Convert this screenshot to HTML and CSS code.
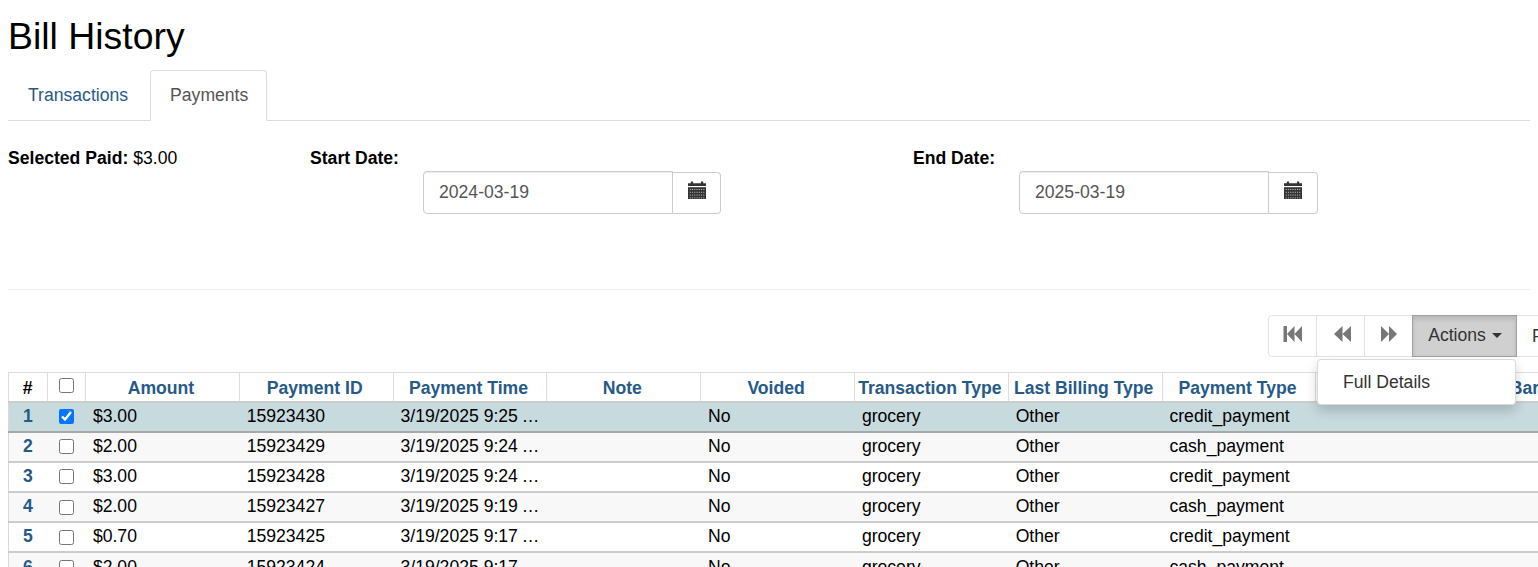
FILE: index.html
```html
<!DOCTYPE html>
<html lang="en">
<head>
    <meta charset="UTF-8">
    <meta name="viewport" content="width=device-width, initial-scale=1.0">
    <title>Bill History</title>
    <link rel="stylesheet" href="styles.css">
</head>
<body>
    <h1 class="page-title">Bill History</h1>
    <ul class="tabs">
        <li class="tab"><a href="#">Transactions</a></li>
        <li class="tab active"><a href="#">Payments</a></li>
    </ul>

    <div class="filters">
        <div class="filter-paid"><b>Selected Paid:</b> $3.00</div>
        <div class="filter-date filter-start">
            <b>Start Date:</b>
            <div class="input-group">
                <input class="date-input" type="text" value="2024-03-19">
                <span class="addon">
                    <svg class="icon-cal" viewBox="0 0 16 16"><path d="M0 5.500h16V16H0z"/><path d="M0 2h2.500V.5h2V2h7V.5h2V2H16v2.500H0z"/><path class="cal-grid" d="M1.500 7.500h13M1.500 10h13M1.500 12.500h13M1.500 15h13"/></svg>
                </span>
            </div>
        </div>
        <div class="filter-date filter-end">
            <b>End Date:</b>
            <div class="input-group">
                <input class="date-input" type="text" value="2025-03-19">
                <span class="addon">
                    <svg class="icon-cal" viewBox="0 0 16 16"><path d="M0 5.500h16V16H0z"/><path d="M0 2h2.500V.5h2V2h7V.5h2V2H16v2.500H0z"/><path class="cal-grid" d="M1.500 7.500h13M1.500 10h13M1.500 12.500h13M1.500 15h13"/></svg>
                </span>
            </div>
        </div>
    </div>

    <hr class="divider">

    <div class="toolbar">
        <button class="btn btn-first">
            <svg class="icon-nav" viewBox="0 0 20 16"><path d="M.5 0h3.500v16H.5zM4 8l7.500-8v16zM11.500 8l7.500-8v16z"/></svg>
        </button>
        <button class="btn">
            <svg class="icon-nav" viewBox="0 0 20 16"><path d="M3 8l8.500-8v16zM11.500 8l8.500-8v16z"/></svg>
        </button>
        <button class="btn">
            <svg class="icon-nav" viewBox="0 0 20 16"><path d="M2 0l8 8-8 8zM10 0l8 8-8 8z"/></svg>
        </button>
        <div class="actions">
            <button class="btn btn-actions">Actions <span class="caret"></span></button>
            <ul class="dropdown">
                <li>Full Details</li>
            </ul>
        </div>
        <button class="btn btn-text">Filter</button>
    </div>

    <table class="grid">
        <colgroup>
            <col class="col-num">
            <col class="col-check">
            <col class="col-data" span="10">
        </colgroup>
        <thead>
            <tr>
                <th class="hash">#</th>
                <th class="check"><input type="checkbox"></th>
                <th>Amount</th>
                <th>Payment ID</th>
                <th>Payment Time</th>
                <th>Note</th>
                <th>Voided</th>
                <th>Transaction Type</th>
                <th>Last Billing Type</th>
                <th>Payment Type</th>
                <th>Card Type</th>
                <th>Barcode</th>
            </tr>
        </thead>
        <tbody>
            <tr class="selected">
                <td class="num">1</td><td class="check"><input type="checkbox" checked></td>
                <td>$3.00</td><td>15923430</td><td>3/19/2025 9:25 AM</td><td></td><td>No</td><td>grocery</td><td>Other</td><td>credit_payment</td><td></td><td></td>
            </tr>
            <tr>
                <td class="num">2</td><td class="check"><input type="checkbox"></td>
                <td>$2.00</td><td>15923429</td><td>3/19/2025 9:24 AM</td><td></td><td>No</td><td>grocery</td><td>Other</td><td>cash_payment</td><td></td><td></td>
            </tr>
            <tr>
                <td class="num">3</td><td class="check"><input type="checkbox"></td>
                <td>$3.00</td><td>15923428</td><td>3/19/2025 9:24 AM</td><td></td><td>No</td><td>grocery</td><td>Other</td><td>credit_payment</td><td></td><td></td>
            </tr>
            <tr>
                <td class="num">4</td><td class="check"><input type="checkbox"></td>
                <td>$2.00</td><td>15923427</td><td>3/19/2025 9:19 AM</td><td></td><td>No</td><td>grocery</td><td>Other</td><td>cash_payment</td><td></td><td></td>
            </tr>
            <tr>
                <td class="num">5</td><td class="check"><input type="checkbox"></td>
                <td>$0.70</td><td>15923425</td><td>3/19/2025 9:17 AM</td><td></td><td>No</td><td>grocery</td><td>Other</td><td>credit_payment</td><td></td><td></td>
            </tr>
            <tr>
                <td class="num">6</td><td class="check"><input type="checkbox"></td>
                <td>$2.00</td><td>15923424</td><td>3/19/2025 9:17 AM</td><td></td><td>No</td><td>grocery</td><td>Other</td><td>cash_payment</td><td></td><td></td>
            </tr>
        </tbody>
    </table>
</body>
</html>
```

FILE: styles.css
```css
html, body {
    height: 567px;
    overflow: hidden;
}
body {
    margin: 0;
    padding: 0 8px;
    font-family: "Liberation Sans", Arial, sans-serif;
    font-size: 17.6px;
    color: #000;
    background-color: #fff;
}
.page-title {
    margin: 0;
    padding-top: 16px;
    font-size: 37.4px;
    font-weight: 400;
    line-height: 40px;
    height: 54px;
}
.tabs {
    display: flex;
    margin: 0;
    padding: 0;
    list-style: none;
    border-bottom: 1px solid #ddd;
    height: 50px;
}
.tab {
    margin-right: 2px;
}
.tab a {
    display: block;
    height: 50px;
    box-sizing: border-box;
    padding: 13px 19px;
    line-height: 22px;
    color: #265a88;
    text-decoration: none;
    border: 1px solid transparent;
    border-radius: 4px 4px 0 0;
}
.tab.active a {
    height: 51px;
    padding-right: 18px;
    color: #555;
    background-color: #fff;
    border-color: #ddd #ddd #fff;
}
.filters {
    display: flex;
    height: 168px;
    padding-top: 27px;
    box-sizing: border-box;
    line-height: 20px;
}
.filter-paid {
    width: 302px;
}
.filter-date b {
    display: block;
}
.filter-start {
    width: 603px;
}
.input-group {
    display: flex;
    align-items: center;
    margin-top: 3px;
}
.filter-start .input-group {
    margin-left: 113px;
}
.filter-end .input-group {
    margin-left: 106px;
}
.date-input {
    width: 250px;
    height: 43px;
    box-sizing: border-box;
    padding: 6px 15px;
    font-family: inherit;
    font-size: 17.6px;
    color: #555;
    border: 1px solid #ccc;
    border-radius: 4px 0 0 4px;
    box-shadow: inset 0 1px 1px rgba(0, 0, 0, 0.075);
}
.addon {
    display: flex;
    align-items: center;
    justify-content: center;
    width: 49px;
    height: 42px;
    box-sizing: border-box;
    border: 1px solid #ccc;
    border-left: 0;
    border-radius: 0 4px 4px 0;
}
.filter-start .addon {
    width: 48px;
}
.icon-cal {
    width: 18px;
    height: 18px;
    margin-top: -5px;
    fill: #333;
}
.cal-grid {
    fill: none;
    stroke: #fff;
    stroke-width: 0.6;
    stroke-dasharray: 1 1;
}
.divider {
    margin: 0;
    border: 0;
    border-top: 1px solid #eee;
}
.toolbar {
    display: flex;
    width: 400px;
    height: 42px;
    margin: 25px 0 0 1260px;
}
.btn {
    width: 49px;
    height: 42px;
    padding: 0;
    margin-left: -1px;
    font-family: inherit;
    font-size: 17.6px;
    color: #333;
    background-color: #fff;
    border: 1px solid #e3e3e3;
}
.btn-first {
    margin-left: 0;
    border-radius: 4px 0 0 4px;
}
.icon-nav {
    display: block;
    width: 20px;
    height: 16px;
    margin: -4px auto 0;
    fill: #777;
}
.actions {
    position: relative;
}
.btn-actions {
    width: 105px;
    padding: 0 0 2px 1px;
    background-color: #d0d0d0;
    border-color: #a0a0a0;
    box-shadow: inset 0 3px 5px rgba(0, 0, 0, 0.125);
}
.caret {
    display: inline-block;
    width: 0;
    height: 0;
    margin-left: 1px;
    vertical-align: middle;
    border-top: 5px solid #333;
    border-left: 5px solid transparent;
    border-right: 5px solid transparent;
}
.btn-text {
    width: 100px;
    padding-left: 15px;
    text-align: left;
}
.dropdown {
    position: absolute;
    top: 44px;
    right: 1px;
    z-index: 10;
    width: 199px;
    box-sizing: border-box;
    margin: 0;
    padding: 11px 0;
    list-style: none;
    color: #333;
    line-height: 22px;
    background-color: #fff;
    border: 1px solid rgba(0, 0, 0, 0.15);
    border-radius: 4px;
    box-shadow: 0 6px 12px rgba(0, 0, 0, 0.175);
}
.dropdown li {
    padding: 0 25px;
}
.grid {
    width: 1582px;
    margin-top: 15px;
    table-layout: fixed;
    border-collapse: collapse;
    border: 1px solid #d8d8d8;
}
.col-num, .col-check {
    width: 38.500px;
}
.col-data {
    width: 153.800px;
}
.grid th {
    height: 29px;
    padding: 3px 3px 0 0;
    box-sizing: border-box;
    font-weight: 700;
    color: #265a88;
    white-space: nowrap;
    overflow: hidden;
    border: 1px solid #ddd;
    border-bottom: 2px solid #ccc;
}
.grid th.hash {
    padding-right: 0;
    color: #000;
}
.grid td {
    height: 30.200px;
    padding: 0 5px 1px 7.400px;
    box-sizing: border-box;
    white-space: nowrap;
    overflow: hidden;
    text-overflow: ellipsis;
    border-bottom: 2px solid #ccc;
}
.grid tbody tr:nth-child(even) {
    background-color: #f8f8f8;
}
.grid tr.selected {
    background-color: #c7dade;
}
.grid tr.selected td {
    border-bottom-color: #a8a8a8;
}
.grid td.num {
    padding: 0 0 1px;
    text-align: center;
    font-weight: 700;
    color: #265a88;
}
.grid td.check {
    padding: 0 0 2px;
    text-align: center;
}
.grid th.check {
    padding: 0 0 4px;
    text-align: center;
}
.check input {
    width: 15px;
    height: 15px;
    margin: 0;
    vertical-align: middle;
}
```
